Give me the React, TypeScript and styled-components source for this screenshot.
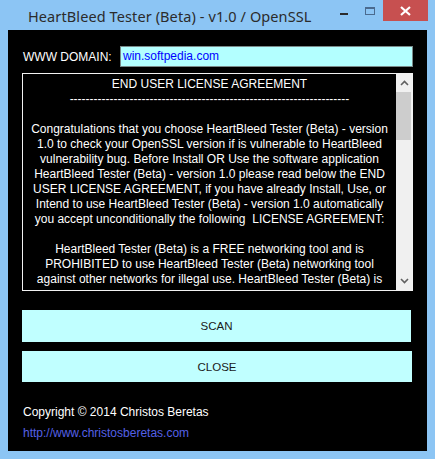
import React from 'react';
import styled, { createGlobalStyle } from 'styled-components';

const GlobalStyle = createGlobalStyle`
  html, body {
    margin: 0;
    padding: 0;
    background: #8cc5f4;
  }
  * {
    box-sizing: border-box;
  }
`;

const licenseLines = [
  'END USER LICENSE AGREEMENT',
  '-'.repeat(70),
  '',
  'Congratulations that you choose HeartBleed Tester (Beta) - version',
  '1.0 to check your OpenSSL version if is vulnerable to HeartBleed',
  'vulnerability bug. Before Install OR Use the software application',
  'HeartBleed Tester (Beta) - version 1.0 please read below the END',
  'USER LICENSE AGREEMENT, if you have already Install, Use, or',
  'Intend to use HeartBleed Tester (Beta) - version 1.0 automatically',
  'you accept unconditionally the following\u00a0 LICENSE AGREEMENT:',
  '',
  'HeartBleed Tester (Beta) is a FREE networking tool and is',
  'PROHIBITED to use HeartBleed Tester (Beta) networking tool',
  'against other networks for illegal use. HeartBleed Tester (Beta) is',
];

function App() {
  return (
    <Window>
      <GlobalStyle />
      <TitleBar>
        <Title>HeartBleed Tester (Beta) - v1.0 / OpenSSL</Title>
        <Controls>
          <MinButton>
            <MinGlyph />
          </MinButton>
          <MaxButton>
            <MaxGlyph />
          </MaxButton>
          <CloseButton>
            <svg width="11" height="10" viewBox="0 0 11 10">
              <path d="M1 1 L10 9 M10 1 L1 9" stroke="#fff" strokeWidth="2.2" />
            </svg>
          </CloseButton>
        </Controls>
      </TitleBar>

      <Client>
        <DomainRow>
          <Label>WWW DOMAIN:</Label>
          <DomainInput>win.softpedia.com</DomainInput>
        </DomainRow>

        <LicenseBox>
          <LicenseText>
            {licenseLines.map((line, i) => (
              <Line key={i}>{line || '\u00a0'}</Line>
            ))}
          </LicenseText>
          <ScrollBar>
            <ScrollArrow>
              <svg width="9" height="6" viewBox="0 0 9 6">
                <path d="M1 5 L4.5 1.5 L8 5" stroke="#606060" strokeWidth="1.6" fill="none" />
              </svg>
            </ScrollArrow>
            <Track>
              <Thumb />
            </Track>
            <ScrollArrow>
              <svg width="9" height="6" viewBox="0 0 9 6">
                <path d="M1 1 L4.5 4.5 L8 1" stroke="#606060" strokeWidth="1.6" fill="none" />
              </svg>
            </ScrollArrow>
          </ScrollBar>
        </LicenseBox>

        <ActionButton $top={19} $height={32} $width={389}>SCAN</ActionButton>
        <ActionButton $top={9} $height={31} $width={390}>CLOSE</ActionButton>

        <Copyright>Copyright © 2014 Christos Beretas</Copyright>
        <SiteLink>http://www.christosberetas.com</SiteLink>
      </Client>
    </Window>
  );
}

const Window = styled.div`
  width: 435px;
  height: 459px;
  background: #8cc5f4;
  display: flex;
  flex-direction: column;
  font-family: 'Liberation Sans', Arial, sans-serif;
`;

const TitleBar = styled.div`
  height: 30px;
  display: flex;
  align-items: flex-start;
  justify-content: space-between;
  padding-left: 28px;
  padding-right: 7px;
`;

const Title = styled.div`
  font-family: 'Noto Sans', 'Open Sans', sans-serif;
  font-size: 14.5px;
  color: #2b2b2b;
  line-height: 20px;
  margin-top: 6px;
  letter-spacing: 0.1px;
`;

const Controls = styled.div`
  display: flex;
  align-items: flex-start;
`;

const MinButton = styled.div`
  width: 26px;
  height: 21px;
  display: flex;
  align-items: flex-start;
  justify-content: center;
  padding-top: 13px;
`;

const MinGlyph = styled.div`
  width: 8px;
  height: 2px;
  background: #2b2b2b;
`;

const MaxButton = styled.div`
  width: 26px;
  height: 21px;
  display: flex;
  justify-content: center;
  padding-top: 7px;
`;

const MaxGlyph = styled.div`
  width: 10px;
  height: 8px;
  border: 1px solid #4a6a8e;
  border-top-width: 2px;
`;

const CloseButton = styled.div`
  width: 45px;
  height: 21px;
  background: #c75050;
  display: flex;
  align-items: center;
  justify-content: center;
`;

const Client = styled.div`
  flex: 1;
  margin: 0 8px 8px 8px;
  background: #000;
  display: flex;
  flex-direction: column;
  padding: 16px 14px 0 14px;
`;

const DomainRow = styled.div`
  display: flex;
  align-items: center;
  height: 21px;
`;

const Label = styled.div`
  width: 98px;
  padding-left: 1px;
  font-size: 12px;
  color: #fff;
`;

const DomainInput = styled.div`
  width: 293px;
  height: 21px;
  background: #b3ffff;
  border: 1px solid #7a8a8a;
  color: #0000ff;
  font-size: 12px;
  line-height: 19px;
  padding-left: 2px;
`;

const LicenseBox = styled.div`
  margin-top: 6px;
  height: 218px;
  width: 391px;
  border: 1px solid #f2f2f2;
  display: flex;
  overflow: hidden;
`;

const LicenseText = styled.div`
  flex: 1;
  padding-top: 3px;
  color: #fff;
  font-size: 12px;
  line-height: 15px;
  text-align: center;
  overflow: hidden;
`;

const Line = styled.div`
  white-space: pre;
`;

const ScrollBar = styled.div`
  width: 16px;
  background: #f0f0f0;
  display: flex;
  flex-direction: column;
`;

const ScrollArrow = styled.div`
  height: 18px;
  display: flex;
  align-items: center;
  justify-content: center;
`;

const Track = styled.div`
  flex: 1;
  padding: 0 1px 0 0;
`;

const Thumb = styled.div`
  height: 48px;
  background: #cdcdcd;
`;

const ActionButton = styled.div<{ $top: number; $height: number; $width: number }>`
  margin-top: ${(p) => p.$top}px;
  height: ${(p) => p.$height}px;
  width: ${(p) => p.$width}px;
  background: #c0ffff;
  color: #1a1a1a;
  font-size: 11.5px;
  display: flex;
  align-items: center;
  justify-content: center;
`;

const Copyright = styled.div`
  margin-top: 23px;
  color: #fff;
  font-size: 12px;
  line-height: 15px;
  padding-left: 1px;
`;

const SiteLink = styled.div`
  margin-top: 6px;
  color: #5560e6;
  font-size: 12px;
  line-height: 15px;
  padding-left: 1px;
`;

export default App;
